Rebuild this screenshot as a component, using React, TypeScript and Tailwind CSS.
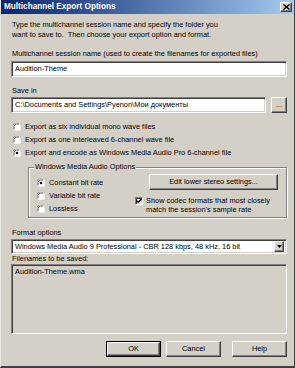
import React from 'react';

const sunken =
  'border border-t-[#808080] border-l-[#808080] border-r-white border-b-white shadow-[inset_1px_1px_0_#404040,inset_-1px_-1px_0_#d4d0c8]';
const raised =
  'border border-t-white border-l-white border-r-[#404040] border-b-[#404040] shadow-[inset_-1px_-1px_0_#808080]';

function Radio({ checked }: { checked?: boolean }) {
  return (
    <svg width="8" height="8" viewBox="0 0 12 12" className="shrink-0">
      <circle cx="6" cy="6" r="5.5" fill="#ffffff" />
      <path d="M1.2 9 A5.5 5.5 0 0 1 9 1.2" stroke="#808080" strokeWidth="1.2" fill="none" />
      <path d="M2.3 8.3 A4.3 4.3 0 0 1 8.3 2.3" stroke="#404040" strokeWidth="1.1" fill="none" />
      <path d="M3 10.8 A5.5 5.5 0 0 0 10.8 3" stroke="#ffffff" strokeWidth="1.2" fill="none" />
      {checked && <circle cx="6" cy="6" r="2" fill="#000000" />}
    </svg>
  );
}

function RadioRow({ checked, label }: { checked?: boolean; label: string }) {
  return (
    <div className="flex items-center gap-[4px] h-[13px] whitespace-nowrap">
      <Radio checked={checked} />
      <span>{label}</span>
    </div>
  );
}

export default function App() {
  return (
    <div
      className="w-[295px] h-[368px] bg-[#d4d0c8] text-black text-[7.4px] leading-[10px] flex flex-col border-l border-l-[#e8e6e0] border-r border-r-[#404040] border-b-2 border-b-[#404040] overflow-hidden"
      style={{ fontFamily: '"Liberation Sans", Arial, sans-serif' }}
    >
      {/* title bar */}
      <div className="h-[14px] flex items-center justify-between pl-[3px] pr-[2px] bg-gradient-to-r from-[#0a246a] to-[#a6caf0]">
        <span className="text-white font-bold text-[8.2px]">Multichannel Export Options</span>
        <div className={`w-[12px] h-[10px] bg-[#d4d0c8] flex items-center justify-center ${raised}`}>
          <svg width="7" height="6" viewBox="0 0 7 6">
            <path d="M0.5 0.5 L6.5 5.5 M6.5 0.5 L0.5 5.5" stroke="#000" strokeWidth="1.4" />
          </svg>
        </div>
      </div>

      <div className="flex flex-col pl-[10px] pr-[7px]">
        <p className="mt-[6px] pl-[1px]">
          Type the multichannel session name and specify the folder you
          <br />
          want to save to.&nbsp; Then choose your export option and format.
        </p>

        <div className="mt-[9px] pl-[1px] whitespace-nowrap">
          Multichannel session name (used to create the filenames for exported files)
        </div>
        <div className={`mt-[2px] h-[16px] bg-white flex items-center pl-[3px] ${sunken}`}>Audition-Theme</div>

        <div className="mt-[9px] pl-[1px]">Save in</div>
        <div className="mt-[1px] flex gap-[5px]">
          <div className={`flex-1 h-[16px] bg-white flex items-center pl-[3px] whitespace-nowrap overflow-hidden ${sunken}`}>
            C:\Documents and Settings\Pyenon\Мои документы
          </div>
          <div className={`w-[16px] h-[16px] flex items-center justify-center ${raised}`}>...</div>
        </div>

        <div className="mt-[7px] flex flex-col pl-[2px]">
          <RadioRow label="Export as six individual mono wave files" />
          <RadioRow label="Export as one interleaved 6-channel wave file" />
          <RadioRow checked label="Export and encode as Windows Media Audio Pro 6-channel file" />
        </div>

        <div className="relative ml-[17px] mt-[8px] h-[51px] border border-[#808080] shadow-[1px_1px_0_#ffffff,inset_1px_1px_0_#ffffff] flex">
          <span className="absolute -top-[6px] left-[5px] bg-[#d4d0c8] px-[1px] whitespace-nowrap">
            Windows Media Audio Options
          </span>
          <div className="flex flex-col pl-[8px] pt-[8px]">
            <RadioRow checked label="Constant bit rate" />
            <RadioRow label="Variable bit rate" />
            <RadioRow label="Lossless" />
          </div>
          <div className="flex flex-col ml-auto pr-[8px] pt-[6px] w-[151px]">
            <div className={`ml-auto w-[129px] h-[16px] flex items-center justify-center ${raised}`}>
              Edit lower stereo settings...
            </div>
            <div className="mt-[6px] flex items-start gap-[3px]">
              <div className={`mt-[1px] w-[8px] h-[8px] bg-white flex items-center justify-center shrink-0 ${sunken}`}>
                <svg width="6" height="6" viewBox="0 0 7 7">
                  <path d="M0.5 3 L2.5 5 L6.5 1" stroke="#000" strokeWidth="1.6" fill="none" />
                </svg>
              </div>
              <span className="leading-[9px] whitespace-nowrap">
                Show codec formats that most closely
                <br />
                match the session's sample rate
              </span>
            </div>
          </div>
        </div>

        <div className="mt-[10px] pl-[1px]">Format options</div>
        <div className={`mt-[1px] h-[15px] bg-white flex items-center pl-[3px] pr-[2px] ${sunken}`}>
          <span className="flex-1 whitespace-nowrap overflow-hidden">
            Windows Media Audio 9 Professional - CBR 128 kbps, 48 kHz, 16 bit
          </span>
          <div className={`w-[10px] h-[11px] bg-[#d4d0c8] flex items-center justify-center ${raised}`}>
            <svg width="5" height="3" viewBox="0 0 5 3">
              <path d="M0 0 H5 L2.5 3 Z" fill="#000" />
            </svg>
          </div>
        </div>

        <div className="pl-[1px]">Filenames to be saved:</div>
        <div className={`h-[70px] pl-[3px] pt-[2px] ${sunken}`}>Audition-Theme.wma</div>

        <div className="mt-[7px] flex justify-end">
          <div className="border border-black">
            <div className={`w-[53px] h-[14px] flex items-center justify-center ${raised}`}>OK</div>
          </div>
          <div className={`ml-[5px] w-[55px] h-[16px] flex items-center justify-center ${raised}`}>Cancel</div>
          <div className={`ml-[11px] w-[55px] h-[16px] flex items-center justify-center ${raised}`}>Help</div>
        </div>
      </div>
    </div>
  );
}
